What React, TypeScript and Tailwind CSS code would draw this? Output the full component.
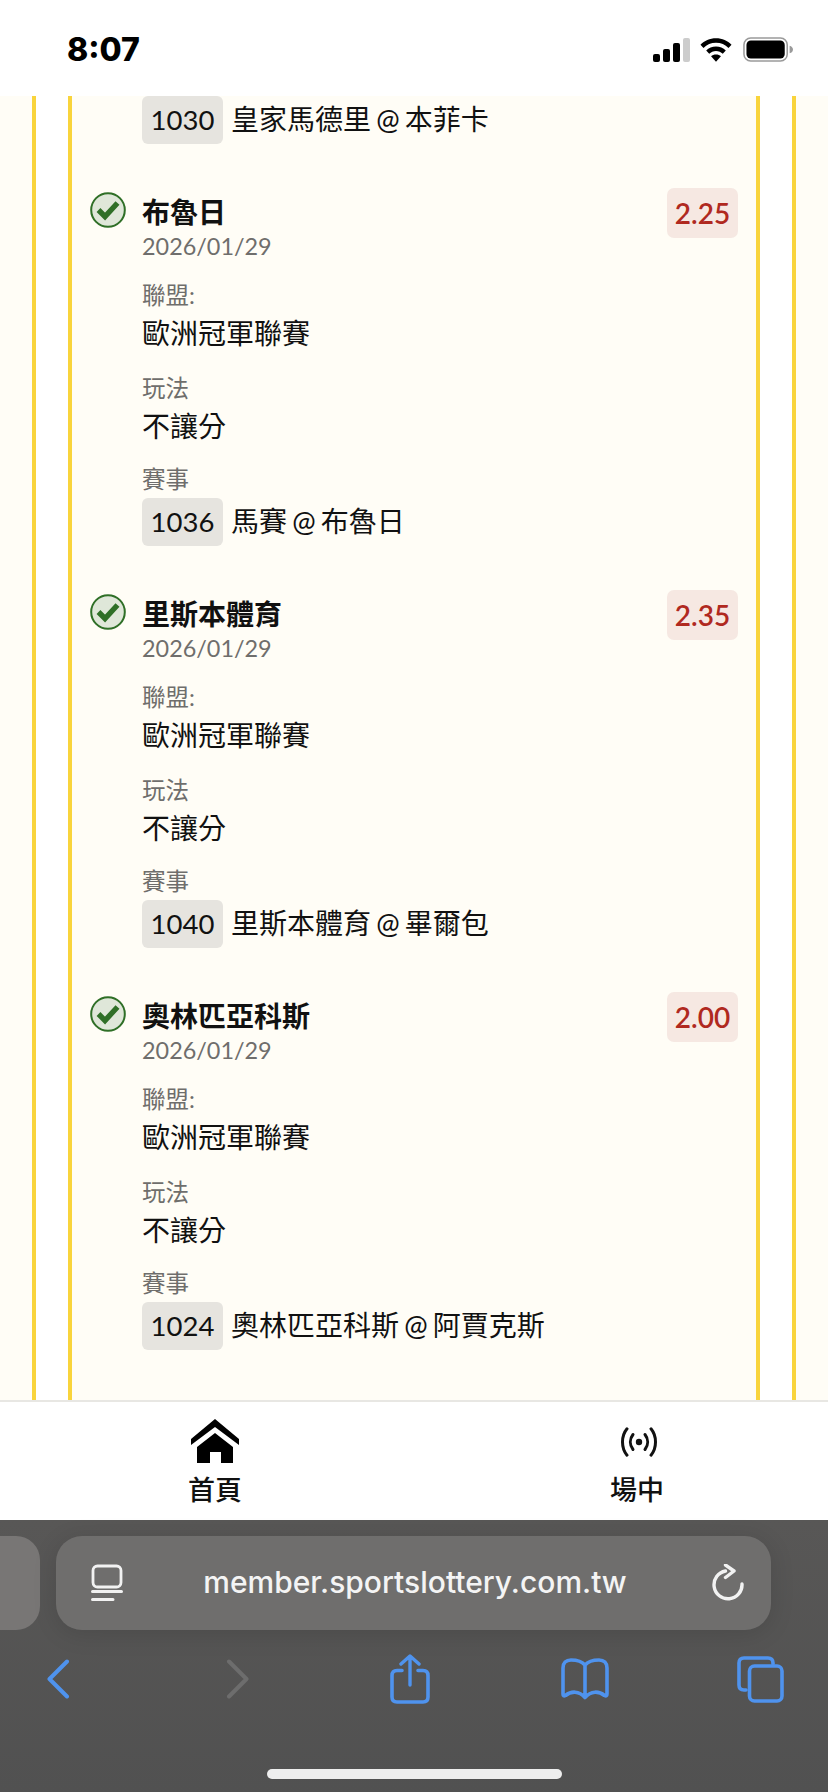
const cjk = "font-['Lato','Noto_Sans_CJK_TC',sans-serif]";

const items = [
  { team: '布魯日', odds: '2.25', num: '1036', match: '馬賽 @ 布魯日' },
  { team: '里斯本體育', odds: '2.35', num: '1040', match: '里斯本體育 @ 畢爾包' },
  { team: '奧林匹亞科斯', odds: '2.00', num: '1024', match: '奧林匹亞科斯 @ 阿賈克斯' },
];

function Check() {
  return (
    <svg width="36" height="36" viewBox="0 0 36 36" className="shrink-0">
      <circle cx="18" cy="18" r="16.8" fill="#dfe7d9" stroke="#2f6f27" strokeWidth="2" />
      <path d="M8.5 18 L15 24.5 L27.5 11" fill="none" stroke="#2f6f27" strokeWidth="5.4" />
    </svg>
  );
}

function Match({ num, text }: { num: string; text: string }) {
  return (
    <div className="flex items-center">
      <span className="flex h-[48px] w-[81px] items-center justify-center rounded-[6px] bg-[#e6e4df] text-[27.5px] text-[#111]">{num}</span>
      <span className="ml-[8px] h-[48px] text-[28px] leading-[46px] text-[#111] [word-spacing:-2px]">{text}</span>
    </div>
  );
}

function Field({ label, value, top }: { label: string; value: string; top: string }) {
  return (
    <div className={top}>
      <div className="h-[38px] text-[23.5px] leading-[38px] text-[#6f6e6c]">{label}</div>
      <div className="h-[40px] text-[28px] leading-[38px] text-[#111]">{value}</div>
    </div>
  );
}

function Row({ team, odds, num, match }: { team: string; odds: string; num: string; match: string }) {
  return (
    <div className="flex items-start pl-[18px] pr-[18px] pb-[44px]">
      <div className="mt-[4px] w-[52px] shrink-0"><Check /></div>
      <div className="flex-1">
        <div className="flex items-start justify-between">
          <div>
            <div className="mt-[7px] h-[36px] text-[28px] font-semibold leading-[34px] text-[#111]">{team}</div>
            <div className="h-[32px] text-[23.4px] leading-[30px] text-[#6f6e6c]">2026/01/29</div>
          </div>
          <div className="flex h-[50px] w-[71px] items-center justify-center rounded-[7px] bg-[#f6e8e2] text-[28px] font-semibold text-[#b0291f]">{odds}</div>
        </div>
        <Field top="mt-[13px]" label="聯盟:" value="歐洲冠軍聯賽" />
        <Field top="mt-[15px]" label="玩法" value="不讓分" />
        <div className="mt-[14px] h-[37px] text-[23.5px] leading-[37px] text-[#6f6e6c]">賽事</div>
        <Match num={num} text={match} />
      </div>
    </div>
  );
}

function StatusIcons() {
  return (
    <div className="flex items-center">
      <svg width="37" height="24" viewBox="0 0 37 24">
        <rect x="0" y="16" width="7" height="8" rx="2" fill="#000" />
        <rect x="10" y="11" width="7" height="13" rx="2" fill="#000" />
        <rect x="20" y="5" width="7" height="19" rx="2" fill="#000" />
        <rect x="30" y="0" width="7" height="24" rx="2" fill="#ccc" />
      </svg>
      <svg width="32" height="24" viewBox="0 0 33 24" className="ml-[10px]">
        <path d="M16.5 0 C10 0 4.5 2.6 0.5 6.6 L3.6 9.9 C7 6.6 11.5 4.6 16.5 4.6 C21.5 4.6 26 6.6 29.4 9.9 L32.5 6.6 C28.5 2.6 23 0 16.5 0Z" fill="#000" />
        <path d="M16.5 8.4 C12.5 8.4 9 9.9 6.4 12.6 L9.5 15.9 C11.3 14.1 13.8 13 16.5 13 C19.2 13 21.7 14.1 23.5 15.9 L26.6 12.6 C24 9.9 20.5 8.4 16.5 8.4Z" fill="#000" />
        <path d="M16.5 24 L11.4 18.5 C12.7 17.3 14.5 16.6 16.5 16.6 C18.5 16.6 20.3 17.3 21.6 18.5Z" fill="#000" />
      </svg>
      <svg width="52" height="25" viewBox="0 0 52 26" className="ml-[10px]">
        <rect x="1" y="1" width="45" height="24" rx="7" fill="none" stroke="#9a9a9a" strokeWidth="1.6" />
        <rect x="3.6" y="3.6" width="39.8" height="18.8" rx="4.6" fill="#000" />
        <path d="M48.5 9 C50.6 9.6 52 11 52 13 C52 15 50.6 16.4 48.5 17Z" fill="#9a9a9a" />
      </svg>
    </div>
  );
}

const blue = '#4f93ee';

export default function App() {
  return (
    <div className={`flex h-[1792px] w-[828px] flex-col overflow-hidden bg-white ${cjk}`}>
      <div className="flex h-[96px] shrink-0 items-start justify-between bg-white pl-[67px] pr-[34px] pt-[37px]">
        <span className="font-['Inter',sans-serif] text-[32px] font-extrabold leading-[26px] text-black">8:07</span>
        <StatusIcons />
      </div>

      <div className="h-[1304px] shrink-0 overflow-hidden bg-[#fffdf6] px-[32px]">
        <div className="h-full border-x-4 border-[#f9d43c] bg-white px-[32px]">
          <div className="h-full overflow-hidden border-x-4 border-[#f9d43c] bg-[#fffdf6]">
            <div className="mb-[44px] ml-[70px]">
              <Match num="1030" text="皇家馬德里 @ 本菲卡" />
            </div>
            {items.map((it) => (
              <Row key={it.num} team={it.team} odds={it.odds} num={it.num} match={it.match} />
            ))}
          </div>
        </div>
      </div>

      <div className="flex h-[120px] shrink-0 border-t-2 border-[#e8e7e3] bg-white pl-[184px] pt-[17px]">
        <div className="flex w-[62px] flex-col items-center">
          <svg width="48" height="44" viewBox="0 0 48 44">
            <path d="M24 0 L48 20 V26 L24 8 L0 26 V20Z" fill="#000" />
            <path d="M24 14 L42 28 V44 H30 V33 H19 V44 H6 V28Z" fill="#000" />
          </svg>
          <span className="mt-[9px] text-[27px] font-medium leading-[36px] text-[#111]">首頁</span>
        </div>
        <div className="ml-[360px] flex w-[62px] flex-col items-center">
          <svg width="36" height="30" viewBox="0 0 36 30" className="ml-[3px] mt-[8px] mb-[6px]">
            <circle cx="18" cy="15" r="3.2" fill="#111" />
            <path d="M12 7.5 C8.5 12 8.5 18 12 22.5 M24 7.5 C27.5 12 27.5 18 24 22.5" fill="none" stroke="#111" strokeWidth="3" strokeLinecap="round" />
            <path d="M6 1.8 C0 9 0 21 6 28.2 M30 1.8 C36 9 36 21 30 28.2" fill="none" stroke="#111" strokeWidth="3" strokeLinecap="round" />
          </svg>
          <span className="mt-[9px] text-[27px] font-medium leading-[36px] text-[#111]">場中</span>
        </div>
      </div>

      <div className="flex h-[272px] shrink-0 flex-col bg-gradient-to-b from-[#585756] to-[#515151]">
        <div className="mt-[16px] flex h-[94px] shrink-0">
          <div className="h-full w-[40px] rounded-r-[24px] bg-[#787675]" />
          <div className="ml-[16px] flex h-full w-[715px] items-center rounded-[26px] bg-[#6f6e6d] pl-[35px] pr-[27px] shadow-[0_4px_24px_rgba(0,0,0,0.12)]">
            <svg width="32" height="38" viewBox="0 0 32 38" className="shrink-0">
              <rect x="2" y="2" width="28" height="21" rx="4.5" fill="none" stroke="#f2f2f2" strokeWidth="2.8" />
              <path d="M1.5 27.5 H30.5 M1.5 35.5 H22" fill="none" stroke="#f2f2f2" strokeWidth="3" strokeLinecap="round" />
            </svg>
            <span className="flex-1 pr-[5px] pb-[1px] text-center font-['Inter',sans-serif] text-[30px] font-medium text-[#f4f4f4]">member.sportslottery.com.tw</span>
            <svg width="32" height="38" viewBox="0 0 32 38" className="shrink-0">
              <path d="M13.5 7 A14 14 0 1 0 30 20" fill="none" stroke="#f2f2f2" strokeWidth="3.4" strokeLinecap="round" />
              <path d="M13.5 1 L22 7 L13.5 13.5" fill="none" stroke="#f2f2f2" strokeWidth="3.4" strokeLinecap="round" strokeLinejoin="round" />
            </svg>
          </div>
        </div>
        <div className="mt-[24px] flex h-[50px] shrink-0 items-center">
          <svg width="24" height="40" viewBox="0 0 24 40" className="ml-[46px] shrink-0">
            <path d="M21 2.5 L3.5 20 L21 37.5" fill="none" stroke={blue} strokeWidth="4" strokeLinecap="round" strokeLinejoin="round" />
          </svg>
          <svg width="24" height="40" viewBox="0 0 24 40" className="ml-[156px] shrink-0">
            <path d="M3 2.5 L20.5 20 L3 37.5" fill="none" stroke="#6d6d6d" strokeWidth="4" strokeLinecap="round" strokeLinejoin="round" />
          </svg>
          <svg width="40" height="50" viewBox="0 0 40 50" className="ml-[140px] shrink-0">
            <path d="M12 16.5 H7 Q2 16.5 2 21.5 V43 Q2 48 7 48 H33 Q38 48 38 43 V21.5 Q38 16.5 33 16.5 H28" fill="none" stroke={blue} strokeWidth="3.6" strokeLinecap="round" />
            <path d="M20 31 V3 M11 10 L20 2 L29 10" fill="none" stroke={blue} strokeWidth="3.4" strokeLinecap="round" strokeLinejoin="round" />
          </svg>
          <svg width="50" height="42" viewBox="0 0 50 42" className="ml-[130px] shrink-0">
            <path d="M25 7 C22 3.5 17 2 11 2 C6 2 3 5 3 10 V36 Q3 38.8 5.5 37.5 C11 33 19 32.5 25 39.5 C31 32.5 39 33 44.5 37.5 Q47 38.8 47 36 V10 C47 5 44 2 39 2 C33 2 28 3.5 25 7 Z M25 7 V39" fill="none" stroke={blue} strokeWidth="3.6" strokeLinejoin="round" />
          </svg>
          <svg width="48" height="47" viewBox="0 0 48 47" className="ml-[127px] shrink-0">
            <path d="M36 8 V7 Q36 2 31 2 H7 Q2 2 2 7 V29 Q2 34 7 34 H9" fill="none" stroke={blue} strokeWidth="3.6" strokeLinecap="round" />
            <rect x="12.5" y="10" width="32.5" height="35" rx="5" fill="none" stroke={blue} strokeWidth="3.6" />
          </svg>
        </div>
        <div className="ml-[267px] mt-[65px] h-[10px] w-[295px] shrink-0 rounded-full bg-[#eeeeee]" />
      </div>
    </div>
  );
}
